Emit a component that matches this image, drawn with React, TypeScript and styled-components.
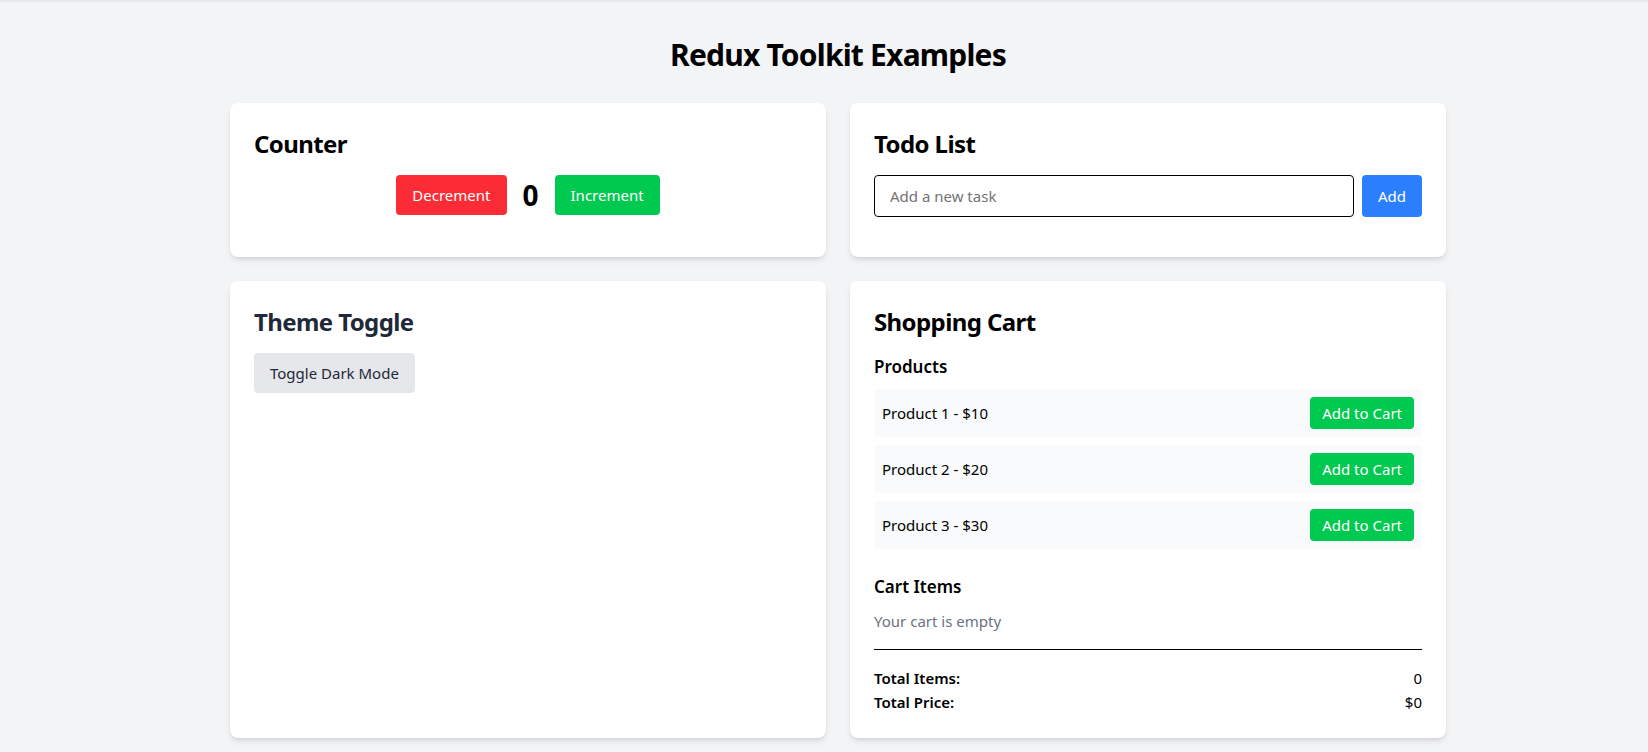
import React from "react";
import styled, { createGlobalStyle } from "styled-components";

const GlobalStyle = createGlobalStyle`
  *, *::before, *::after { box-sizing: border-box; }
  html, body { margin: 0; padding: 0; }
  body {
    background: #f3f4f6;
    font-family: "Noto Sans", "Open Sans", Arial, sans-serif;
    color: #000;
  }
`;

const Page = styled.div`
  min-height: 100vh;
  border-top: 2px solid #e7e7e8;
  padding: 35px 0 32px 28px;
`;

const Container = styled.div`
  max-width: 1216px;
  margin: 0 auto;
`;

const Title = styled.h1`
  margin: 0 0 30px;
  text-align: center;
  font-size: 30px;
  line-height: 36px;
  font-weight: 700;
  letter-spacing: -0.8px;
`;

const Grid = styled.div`
  display: grid;
  grid-template-columns: 1fr 1fr;
  gap: 24px;
`;

const Card = styled.section`
  background: #fff;
  border-radius: 8px;
  padding: 24px;
  box-shadow: 0 4px 6px -1px rgba(0, 0, 0, 0.1), 0 2px 4px -2px rgba(0, 0, 0, 0.1);
`;

const CardTitle = styled.h2<{ $color?: string }>`
  margin: 0 0 16px;
  padding-top: 1px;
  height: 32px;
  font-size: 24px;
  line-height: 32px;
  font-weight: 700;
  letter-spacing: -0.6px;
  color: ${(p) => p.$color ?? "#000"};
`;

const CounterRow = styled.div`
  display: flex;
  align-items: center;
  justify-content: center;
  gap: 16px;
`;

const CountValue = styled.span`
  font-size: 28px;
  line-height: 36px;
  font-weight: 700;
`;

const Button = styled.button<{ $bg: string; $fg?: string; $compact?: boolean }>`
  border: none;
  border-radius: 4px;
  background: ${(p) => p.$bg};
  color: ${(p) => p.$fg ?? "#fff"};
  padding: ${(p) => (p.$compact ? "4px 12px" : "8px 16px")};
  font-family: inherit;
  font-size: 15px;
  line-height: 24px;
  cursor: pointer;
`;

const TodoRow = styled.div`
  display: flex;
  gap: 8px;
`;

const TaskInput = styled.input`
  flex: 1;
  min-width: 0;
  border: 1px solid #000;
  border-radius: 4px;
  padding: 8px 15px;
  font-family: inherit;
  font-size: 15px;
  line-height: 24px;
  color: #000;
  background: #fff;
  outline: none;
  &::placeholder { color: #737373; }
`;

const TodoList = styled.ul`
  list-style: none;
  margin: 16px 0 0;
  padding: 0;
`;

const SubTitle = styled.h3`
  margin: 0 0 8px;
  font-size: 17px;
  line-height: 28px;
  font-weight: 600;
`;

const ProductList = styled.div`
  display: flex;
  flex-direction: column;
  gap: 8px;
`;

const ProductRow = styled.div`
  display: flex;
  align-items: center;
  justify-content: space-between;
  padding: 8px;
  background: #f9fafb;
  border-radius: 4px;
  font-size: 15px;
  line-height: 24px;
`;

const Section = styled.div<{ $gap?: number }>`
  margin-top: ${(p) => p.$gap ?? 0}px;
`;

const EmptyText = styled.p`
  margin: 0;
  color: #6a7282;
  font-size: 15px;
  line-height: 24px;
`;

const Totals = styled.div`
  margin-top: 16px;
  padding-top: 16px;
  border-top: 1px solid #000;
`;

const TotalRow = styled.div`
  display: flex;
  justify-content: space-between;
  font-size: 15px;
  line-height: 24px;
`;

const TotalLabel = styled.span`
  font-weight: 600;
`;

const products = [
  { id: 1, name: "Product 1", price: 10 },
  { id: 2, name: "Product 2", price: 20 },
  { id: 3, name: "Product 3", price: 30 },
];

export default function App() {
  return (
    <>
      <GlobalStyle />
      <Page>
        <Container>
          <Title>Redux Toolkit Examples</Title>
          <Grid>
            <Card>
              <CardTitle>Counter</CardTitle>
              <CounterRow>
                <Button $bg="#fb2c36">Decrement</Button>
                <CountValue>0</CountValue>
                <Button $bg="#00c950">Increment</Button>
              </CounterRow>
            </Card>
            <Card>
              <CardTitle>Todo List</CardTitle>
              <TodoRow>
                <TaskInput placeholder="Add a new task" />
                <Button $bg="#2b7fff">Add</Button>
              </TodoRow>
              <TodoList />
            </Card>
            <Card>
              <CardTitle $color="#1e2939">Theme Toggle</CardTitle>
              <Button $bg="#e5e7eb" $fg="#1e2939">
                Toggle Dark Mode
              </Button>
            </Card>
            <Card>
              <CardTitle>Shopping Cart</CardTitle>
              <Section>
                <SubTitle>Products</SubTitle>
                <ProductList>
                  {products.map((p) => (
                    <ProductRow key={p.id}>
                      <span>
                        {p.name} - ${p.price}
                      </span>
                      <Button $bg="#00c950" $compact>
                        Add to Cart
                      </Button>
                    </ProductRow>
                  ))}
                </ProductList>
              </Section>
              <Section $gap={24}>
                <SubTitle>Cart Items</SubTitle>
                <EmptyText>Your cart is empty</EmptyText>
                <Totals>
                  <TotalRow>
                    <TotalLabel>Total Items:</TotalLabel>
                    <span>0</span>
                  </TotalRow>
                  <TotalRow>
                    <TotalLabel>Total Price:</TotalLabel>
                    <span>$0</span>
                  </TotalRow>
                </Totals>
              </Section>
            </Card>
          </Grid>
        </Container>
      </Page>
    </>
  );
}
